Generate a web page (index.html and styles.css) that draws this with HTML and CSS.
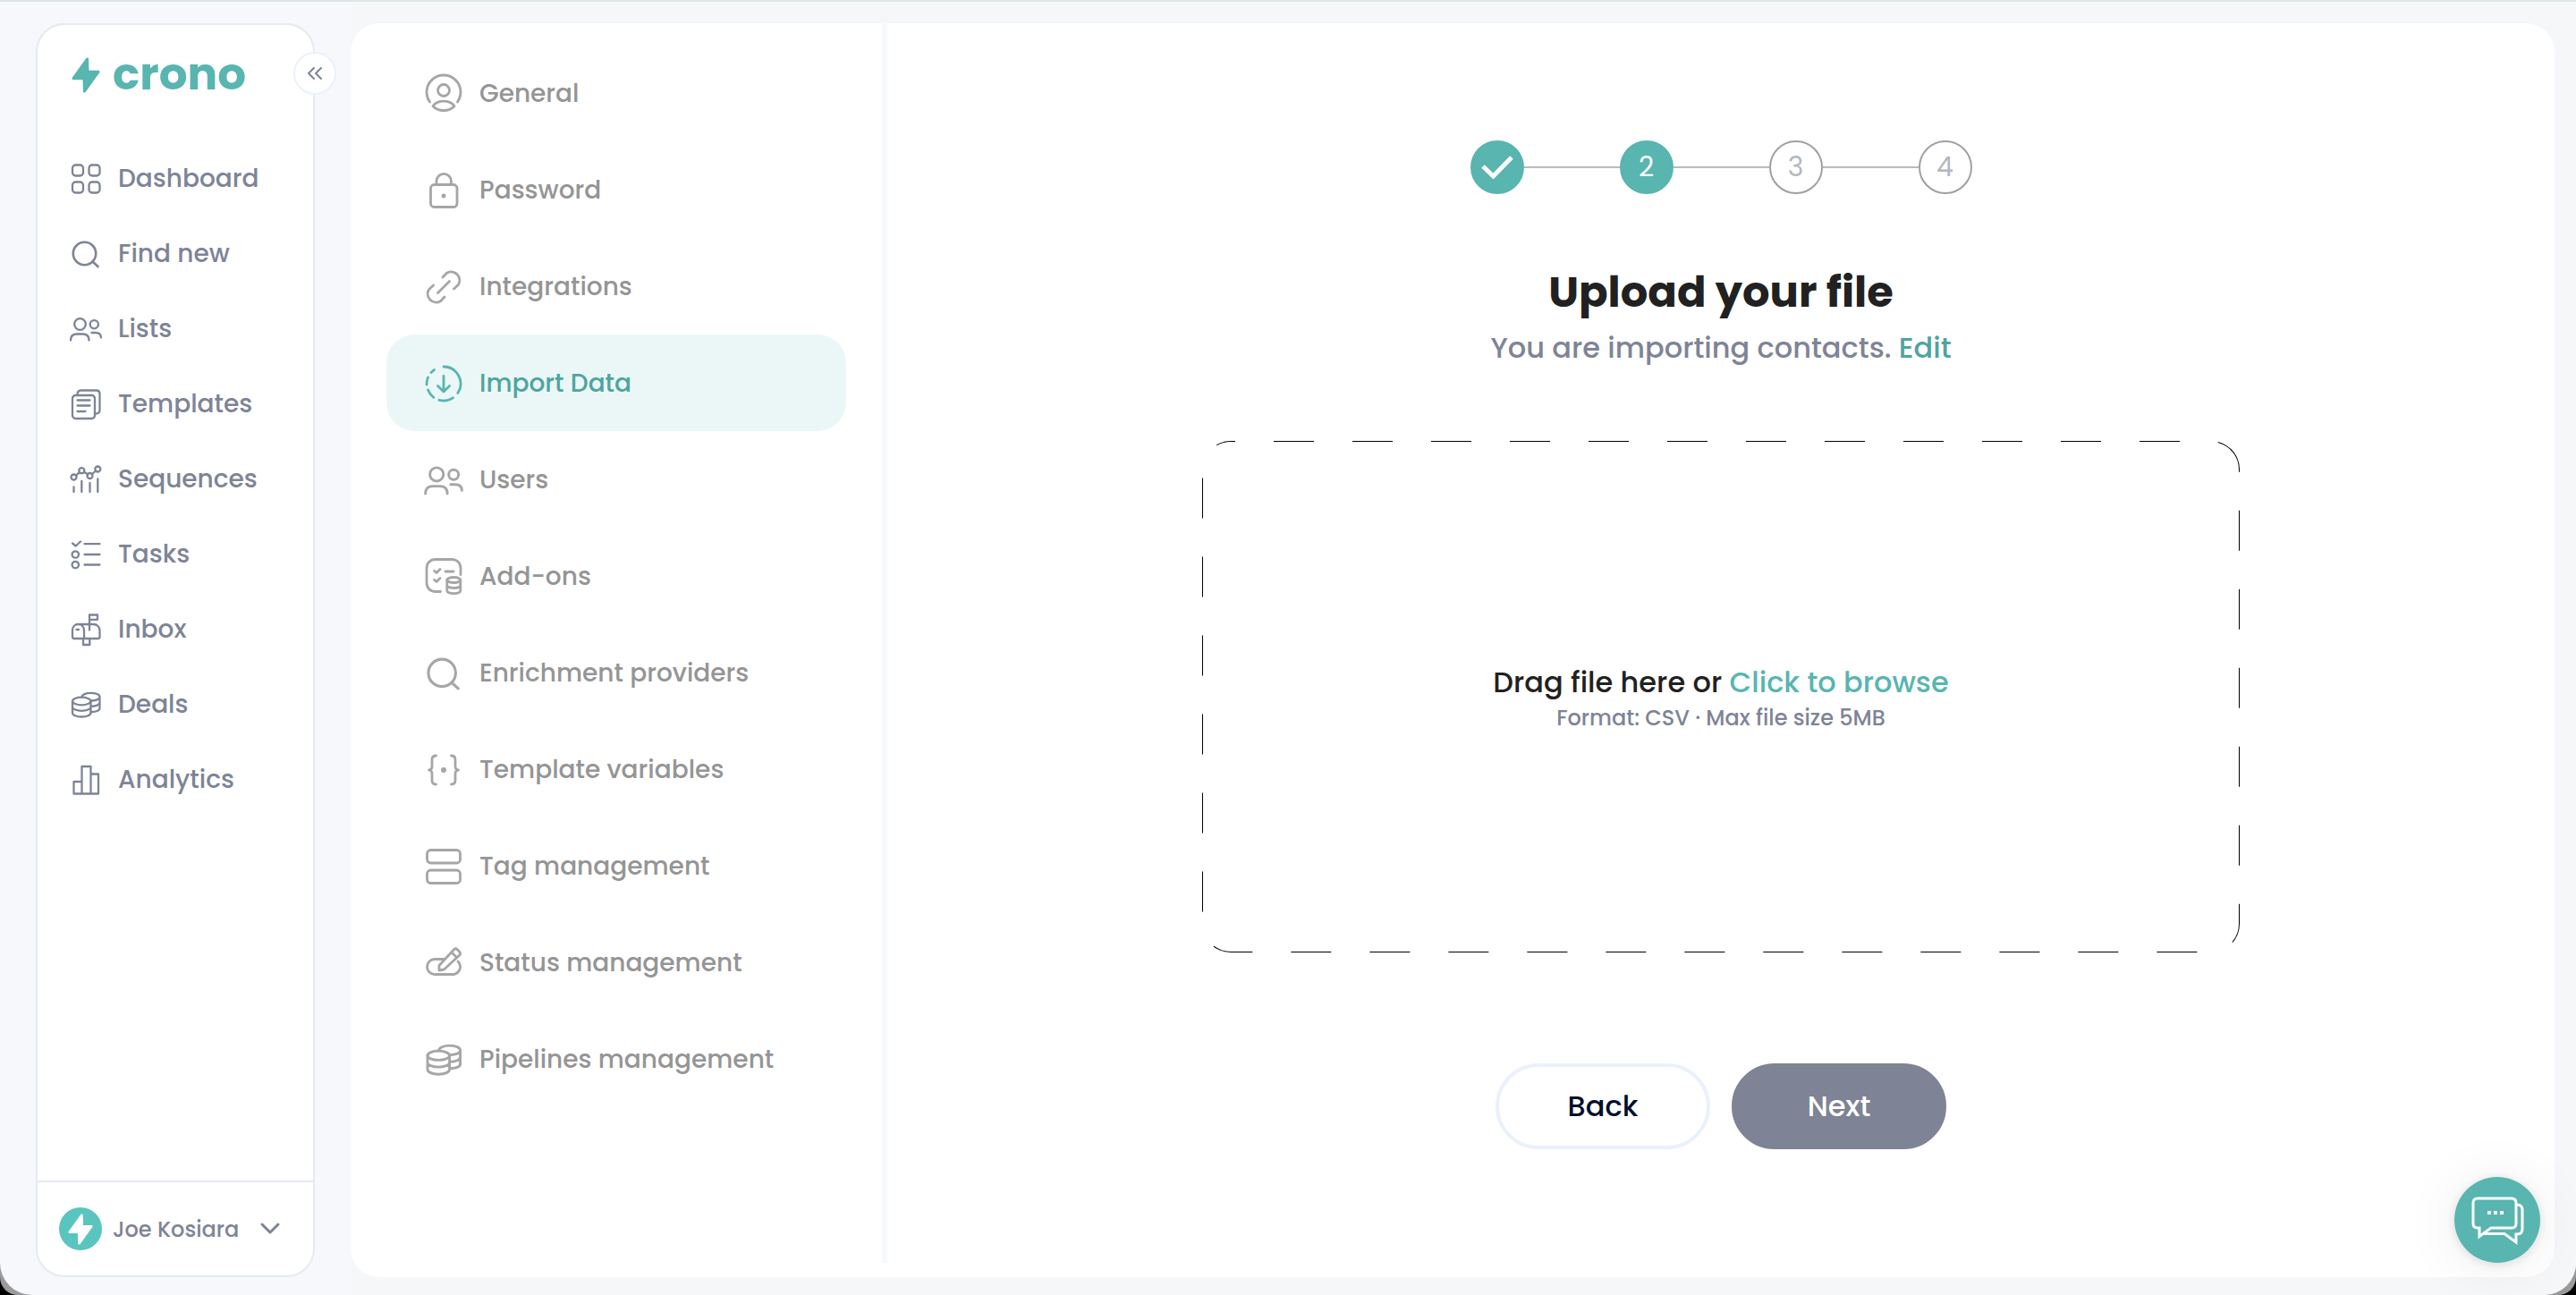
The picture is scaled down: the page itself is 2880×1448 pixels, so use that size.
FILE: index.html
```html
<!DOCTYPE html>
<html lang="en">
<head>
    <meta charset="UTF-8">
    <meta name="viewport" content="width=device-width, initial-scale=1.0">
    <title>Crono - Import Data</title>
    <link rel="stylesheet" href="styles.css">
</head>
<body>
    <!-- icons used in more than one place -->
    <svg class="sprite" aria-hidden="true">
        <symbol id="bolt" viewBox="0 0 32 40">
            <path d="M17.6 2 18 16.3h12L14.4 38 14 23.7H2z" fill="currentColor" stroke="currentColor" stroke-width="3" stroke-linejoin="round"/>
        </symbol>
        <symbol id="search" viewBox="0 0 40 40">
            <circle cx="18.5" cy="19.5" r="12.7" stroke-width="2.6"/>
            <path d="M27.8 28.8 33.5 34" stroke-width="2.6"/>
        </symbol>
        <symbol id="people" viewBox="0 0 40 40">
            <circle cx="13.5" cy="14.5" r="6.3"/>
            <circle cx="29.3" cy="14.8" r="4.6"/>
            <path d="M3 32.5c0-4.6 2.5-7 7-7h6.5c4.5 0 7 2.4 7 7M26.5 24h4c4.2 0 6.5 2 6.5 5.5"/>
        </symbol>
        <symbol id="coins" viewBox="0 0 40 40">
            <ellipse cx="15.2" cy="16" rx="10.2" ry="4.3"/>
            <path d="M5 16v13c0 2.6 4.6 4.5 10.2 4.5s10.3-1.9 10.3-4.5V16M5 22.5c0 2.4 4.6 4.3 10.2 4.3s10.3-1.9 10.3-4.3"/>
            <path d="M15.5 11.5c0-2.8 4.5-4.7 10-4.7s10 1.9 10 4.3v13c0 2.3-4 4-10 4M25.5 15.5c5.5 0 10-1.7 10-4.3M25.5 21.8c5.5 0 10-1.7 10-4.2"/>
        </symbol>
    </svg>

    <div class="app">
        <aside class="sidebar">
            <button class="collapse" aria-label="Collapse menu">
                <svg viewBox="0 0 20 16"><path d="M9 2 3 8l6 6M17 2l-6 6 6 6"/></svg>
            </button>
            <a href="#" class="logo">
                <svg class="logo-bolt"><use href="#bolt"/></svg>
                <span>crono</span>
            </a>
            <nav class="main-nav">
                <a href="#">
                    <svg class="icon" viewBox="0 0 40 40"><rect x="5" y="4.500" width="12" height="12" rx="3.5"/><rect x="23.5" y="4.500" width="12" height="12" rx="3.5"/><rect x="5" y="23.5" width="12" height="12" rx="3.5"/><rect x="23.5" y="23.5" width="12" height="12" rx="3.5"/></svg>
                    Dashboard
                </a>
                <a href="#"><svg class="icon"><use href="#search"/></svg>Find new</a>
                <a href="#"><svg class="icon"><use href="#people"/></svg>Lists</a>
                <a href="#">
                    <svg class="icon" viewBox="0 0 40 40"><rect x="5" y="10" width="25" height="26" rx="3.5"/><path d="M10.5 9.5c0-3.5 1-5 4-5h17c2.5 0 4 1.5 4 4v18c0 2.8-1.5 4-4.5 4M10.5 15.5h14M10.5 21.5h14M10.5 28h9"/></svg>
                    Templates
                </a>
                <a href="#">
                    <svg class="icon" viewBox="0 0 40 40"><circle cx="6.5" cy="17.5" r="3"/><circle cx="15.3" cy="10.2" r="3"/><circle cx="24.5" cy="16" r="3"/><circle cx="33.3" cy="8.5" r="3"/><path d="m9 15.5 4-3.3M18 11.8l4 2.5M27 14l4-3.5M6.500 28.5V34M15.3 22v12M24.5 24v10M33.3 19.5V34"/></svg>
                    Sequences
                </a>
                <a href="#">
                    <svg class="icon" viewBox="0 0 40 40"><path d="m5 7.500 3.7 3L14 5.500M18.5 8.200h17M18.5 20h17M18.5 31.500h17"/><circle cx="8.3" cy="20" r="3.7"/><circle cx="8.3" cy="31.5" r="3.7"/></svg>
                    Tasks
                </a>
                <a href="#">
                    <svg class="icon" viewBox="0 0 40 40"><path d="M5 28v-7c0-4 2.5-7 6.5-7h17c4 0 7 3 7 7v7c0 1.2-.8 2-2 2H7c-1.2 0-2-.8-2-2zM11.5 14c3.8 0 6.5 3 6.5 7v9M9.5 20h2.5M24 20.5v-17h9v5.3h-9M17 30v7h7.3v-7"/></svg>
                    Inbox
                </a>
                <a href="#"><svg class="icon"><use href="#coins"/></svg>Deals</a>
                <a href="#">
                    <svg class="icon" viewBox="0 0 40 40"><path d="M6.5 35.5V22h9v13.5zM15.5 35.5V5h10v30.5zM25.5 13.5H34v22h-8.5"/></svg>
                    Analytics
                </a>
            </nav>
            <button class="user">
                <span class="avatar"><svg><use href="#bolt"/></svg></span>
                <span class="user-name">Joe Kosiara</span>
                <svg class="chevron" viewBox="0 0 24 16"><path d="m3 3 9 9 9-9"/></svg>
            </button>
        </aside>

        <div class="page">
            <main class="panel">
                <nav class="settings-nav">
                    <a href="#">
                        <svg class="icon" viewBox="0 0 48 48"><path d="M8.5 33A19 19 0 1 1 39.5 33M12 37.5c3-4 7.5-5.3 12-5.3s9 1.300 12 5.3c-3 3.5-7.5 5-12 5s-9-1.5-12-5z"/><circle cx="24" cy="20" r="6.5"/></svg>
                        General
                    </a>
                    <a href="#">
                        <svg class="icon" viewBox="0 0 48 48"><rect x="9.5" y="17.5" width="29.5" height="25" rx="4"/><path d="M16 17.5v-4a8.2 8.2 0 0 1 16.4 0v4"/><circle class="dot" cx="24" cy="30" r="2.5"/></svg>
                        Password
                    </a>
                    <a href="#">
                        <svg class="icon" viewBox="0 0 48 48"><path d="m23 13 4.5-4.7A9.5 9.5 0 0 1 40.5 21.3L35.5 26M25 35l-4.5 4.7A9.5 9.5 0 0 1 7.5 26.7L12.5 22M17.5 30.5l13-13"/></svg>
                        Integrations
                    </a>
                    <a href="#" class="active">
                        <svg class="icon" viewBox="0 0 48 48"><path d="M24 5A19 19 0 0 1 39.8 34.5M34.5 39.8A19 19 0 0 1 19 42.3M12.8 39.3A19 19 0 0 1 6.5 31M5 25A19 19 0 0 1 6.5 17M10 11.5 13.5 8.5M24 15.5v17M17.5 26.5l6.5 6.5 6.5-6.5"/></svg>
                        Import Data
                    </a>
                    <a href="#"><svg class="icon shared"><use href="#people"/></svg>Users</a>
                    <a href="#">
                        <svg class="icon" viewBox="0 0 48 48"><path d="M43 21.500v-7c0-6-4-10-10-10H15c-6 0-10 4-10 10v16c0 6 4 10 10 10h5.5M13.5 17.3l2.5 2.2 4-4M13.5 27.3l2.5 2.2 4-4M26 18h9"/><ellipse cx="35.3" cy="27.5" rx="7.5" ry="3"/><path d="M27.8 27.5v12c0 1.8 3.3 3.2 7.5 3.2s7.5-1.4 7.5-3.2v-12M27.8 33.5c0 1.8 3.3 3 7.5 3s7.5-1.2 7.5-3"/></svg>
                        Add-ons
                    </a>
                    <a href="#"><svg class="icon shared"><use href="#search"/></svg>Enrichment providers</a>
                    <a href="#">
                        <svg class="icon" viewBox="0 0 48 48"><path d="M15.5 8C12.3 8 11 9.2 11 12.2v8c0 2-1 3.3-3.5 3.8 2.5.5 3.5 1.8 3.5 3.8v8c0 3 1.3 4.2 4.5 4.2M32.5 8c3.2 0 4.5 1.2 4.5 4.2v8c0 2 1 3.3 3.5 3.8-2.5.5-3.5 1.8-3.5 3.8v8c0 3-1.3 4.2-4.5 4.2"/><circle class="dot" cx="24" cy="24" r="3"/></svg>
                        Template variables
                    </a>
                    <a href="#">
                        <svg class="icon" viewBox="0 0 48 48"><rect x="5.5" y="5.5" width="37" height="14.5" rx="4"/><rect x="5.5" y="28" width="37" height="14.5" rx="4"/></svg>
                        Tag management
                    </a>
                    <a href="#">
                        <svg class="icon" viewBox="0 0 48 48"><path d="M25 19.5H14a8.5 8.5 0 0 0 0 17h20.5a8.5 8.5 0 0 0 5.5-14.5M19 32v-5.5L35.5 8.8c1.2-1.2 2.6-1.2 3.8 0l2.4 2.5c1.1 1.2 1.1 2.5 0 3.7L24.5 31zM33 12l5.5 5.5"/></svg>
                        Status management
                    </a>
                    <a href="#"><svg class="icon shared"><use href="#coins"/></svg>Pipelines management</a>
                </nav>

                <section class="wizard">
                    <ol class="stepper">
                        <li class="done"><svg viewBox="0 0 36 30" aria-label="Step 1 done"><path d="m2 14 11.5 11L34 4"/></svg></li>
                        <li class="current">2</li>
                        <li>3</li>
                        <li>4</li>
                    </ol>
                    <h1>Upload your file</h1>
                    <p class="subtitle">You are importing contacts. <a href="#">Edit</a></p>

                    <div class="dropzone">
                        <svg class="dashes" aria-hidden="true"><rect width="100%" height="100%" rx="32"/></svg>
                        <p class="drop-text">Drag file here or <label for="file">Click to browse</label></p>
                        <input type="file" id="file" accept=".csv">
                        <p class="drop-hint">Format: CSV · Max file size 5MB</p>
                    </div>

                    <div class="actions">
                        <button class="btn back">Back</button>
                        <button class="btn next">Next</button>
                    </div>
                </section>
            </main>
        </div>
        <button class="chat" aria-label="Open chat">
            <svg viewBox="0 0 60 56"><path d="M8 4h38q5 0 5 5v23q0 5-5 5H23l-13 9.5V37H8q-5 0-5-5V9q0-5 5-5zM52 11q6 0 6 6v21q0 6-6 6h-1v9l-13-9.5H15"/><path class="dots" d="M19 18h4v4h-4zM26 18h4v4h-4zM33 18h4v4h-4z"/></svg>
        </button>
    </div>
</body>
</html>
```

FILE: styles.css
```css
* {
    box-sizing: border-box;
}
html {
    height: 100%;
    background: #000;
}
body {
    margin: 0;
    height: 100%;
    background: #9a9a9a;
    border-radius: 0 0 20px 20px;
    font-family: "Poppins", "Inter", sans-serif;
    font-weight: 500;
    overflow: hidden;
}
a {
    color: inherit;
    text-decoration: none;
}
button {
    font: inherit;
    cursor: pointer;
}
svg {
    fill: none;
    stroke: currentColor;
    stroke-linecap: round;
    stroke-linejoin: round;
}
.sprite {
    position: absolute;
    width: 0;
    height: 0;
}
.app {
    display: flex;
    min-height: 100%;
    background: #f6f8fc;
    border-top: 2px solid #dde6e3;
    border-radius: 0 0 36px 36px;
    overflow: hidden;
}

/* left sidebar */
.sidebar {
    position: relative;
    display: flex;
    flex-direction: column;
    flex-shrink: 0;
    width: 312px;
    margin: 24px 40px 20px;
    background: #fff;
    border: 2px solid #e6e9f0;
    border-radius: 32px;
    color: #7e8497;
}
.collapse {
    position: absolute;
    top: 30px;
    right: -26px;
    display: flex;
    align-items: center;
    justify-content: center;
    width: 48px;
    height: 48px;
    padding: 0;
    background: #fff;
    border: 2px solid #ebf1fb;
    border-radius: 50%;
    color: #7e8497;
}
.collapse svg {
    width: 20px;
    height: 16px;
    stroke-width: 2;
}
.logo {
    display: flex;
    align-items: center;
    gap: 14px;
    height: 40px;
    margin: 36px 38px 0;
    color: #58b5b0;
    font-size: 50px;
    font-weight: 700;
    line-height: 40px;
}
.logo span {
    padding-bottom: 2px;
}
.logo-bolt {
    width: 32px;
    height: 40px;
}
.main-nav {
    flex: 1;
    padding-top: 54px;
}
.main-nav a {
    display: flex;
    align-items: center;
    gap: 16px;
    height: 84px;
    padding-left: 34px;
    font-size: 28px;
}
.main-nav .icon {
    width: 40px;
    height: 40px;
    stroke-width: 2.3px;
}
.user {
    display: flex;
    align-items: center;
    height: 106px;
    padding: 0 24px;
    background: none;
    border: 0;
    border-top: 2px solid #e6e9f0;
    color: #7e8497;
    font-size: 24px;
}
.avatar {
    display: flex;
    align-items: center;
    justify-content: center;
    width: 48px;
    height: 48px;
    margin-right: 12px;
    border-radius: 50%;
    background: #5ac5bf;
    color: #fff;
}
.avatar svg {
    width: 28px;
    height: 35px;
}
.chevron {
    width: 24px;
    height: 16px;
    margin: 0 12px 0 auto;
    stroke-width: 3;
}

/* white panel */
.page {
    display: flex;
    flex: 1;
    padding: 24px 24px 20px 0;
    background: #f5f7f9;
}
.panel {
    display: flex;
    flex: 1;
    background: #fff;
    border-radius: 32px;
}
.settings-nav {
    flex-shrink: 0;
    width: 600px;
    margin-bottom: 16px;
    padding: 24px 40px 0;
    border-right: 6px solid #f6f8fc;
}
.settings-nav a {
    display: flex;
    align-items: center;
    gap: 16px;
    height: 108px;
    padding: 2px 0 0 40px;
    border-radius: 32px;
    color: #959595;
    font-size: 28px;
}
.settings-nav .icon {
    width: 48px;
    height: 48px;
    color: #a6a6a6;
    stroke-width: 2.8px;
}
.settings-nav .shared {
    stroke-width: 2.4px;
}
.settings-nav .dot {
    fill: currentColor;
    stroke: none;
}
.settings-nav .active {
    background: #ebf7f7;
    color: #4ea59f;
}
.settings-nav .active .icon {
    color: #58b5b0;
}

/* import wizard */
.wizard {
    display: flex;
    flex: 1;
    flex-direction: column;
    align-items: center;
    padding: 131px 40px 40px;
}
.stepper {
    display: flex;
    margin: 0;
    padding: 0;
    list-style: none;
}
.stepper li {
    position: relative;
    display: flex;
    align-items: center;
    justify-content: center;
    width: 60px;
    height: 60px;
    border: 2px solid #a0a0a0;
    border-radius: 50%;
    color: #b3b7c3;
    font-size: 30px;
    font-weight: 400;
}
.stepper li + li {
    margin-left: 107px;
}
.stepper li + li::before {
    content: "";
    position: absolute;
    top: 27px;
    right: 58px;
    width: 107px;
    height: 2px;
    background: #bbb;
}
.stepper .done,
.stepper .current {
    background: #58b5b0;
    border-color: #58b5b0;
    color: #fff;
}
.stepper svg {
    width: 36px;
    height: 30px;
    stroke-width: 5;
    stroke-linecap: butt;
    stroke-linejoin: miter;
}
.wizard h1 {
    margin: 80px 0 0;
    color: #212121;
    font-size: 48px;
    font-weight: 700;
    line-height: 60px;
}
.subtitle {
    margin: 12px 0 0;
    color: #7e8497;
    font-size: 32px;
    line-height: 40px;
}
.subtitle a {
    color: #4ea59f;
}
.dropzone {
    position: relative;
    display: flex;
    flex-direction: column;
    align-items: center;
    justify-content: center;
    gap: 4px;
    width: 100%;
    max-width: 1160px;
    height: 572px;
    margin-top: 84px;
    padding-top: 4px;
}
.dashes {
    position: absolute;
    top: 0;
    left: 0;
    width: 100%;
    height: 100%;
    border-radius: 32px;
    color: #000;
    stroke-width: 2;
    stroke-linecap: butt;
    stroke-dasharray: 45 43;
    stroke-dashoffset: 40;
    pointer-events: none;
}
.dropzone p {
    margin: 0;
}
.dropzone input {
    position: absolute;
    width: 1px;
    height: 1px;
    opacity: 0;
}
.drop-text {
    color: #212121;
    font-size: 32px;
    line-height: 40px;
}
.drop-text label {
    color: #58b5b0;
    cursor: pointer;
}
.drop-hint {
    color: #7e8497;
    font-size: 24px;
    line-height: 32px;
}
.actions {
    display: flex;
    gap: 24px;
    margin-top: 124px;
}
.btn {
    width: 240px;
    height: 96px;
    border: 4px solid #ebf1fb;
    border-radius: 48px;
    background: #fff;
    color: #000f2b;
    font-size: 32px;
}
.btn.next {
    background: #7e8395;
    border-color: #7e8395;
    color: #fff;
}
.chat {
    position: fixed;
    right: 40px;
    bottom: 36px;
    display: flex;
    align-items: center;
    justify-content: center;
    width: 96px;
    height: 96px;
    padding: 0;
    border: 0;
    border-radius: 50%;
    background: #58b5b0;
    box-shadow: 0 2px 12px rgba(0, 0, 0, 0.12), 0 4px 64px rgba(0, 0, 0, 0.08);
    color: #fff;
}
.chat svg {
    width: 60px;
    height: 56px;
    stroke-width: 3;
    stroke-linejoin: miter;
}
.chat .dots {
    fill: #fff;
    stroke: none;
}
```
